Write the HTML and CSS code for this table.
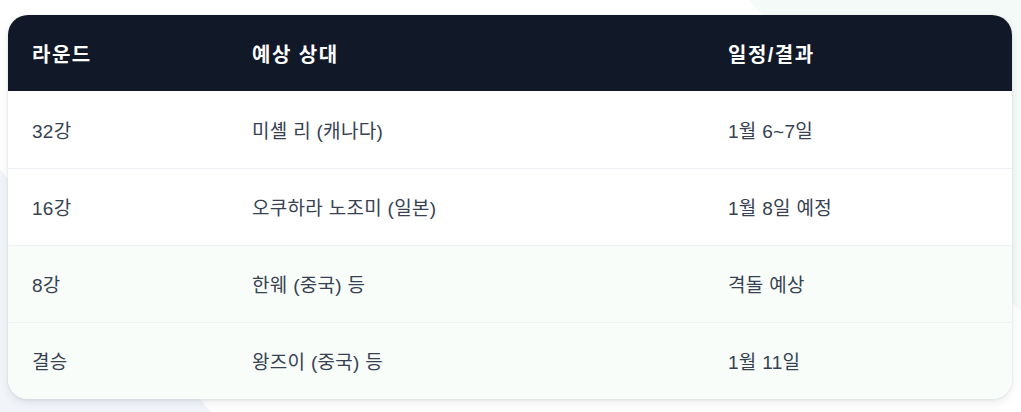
FILE: index.html
```html
<!DOCTYPE html>
<html lang="ko">
<head>
<meta charset="utf-8">
<link rel="stylesheet" href="styles.css">
<title>대진표</title>
</head>
<body>
<div class="page">
  <div class="card">
    <table class="bracket">
      <colgroup>
        <col class="c-round">
        <col class="c-opp">
        <col class="c-date">
      </colgroup>
      <thead>
        <tr><th>라운드</th><th>예상 상대</th><th>일정/결과</th></tr>
      </thead>
      <tbody>
        <tr><td>32강</td><td>미셸 리 (캐나다)</td><td>1월 6~7일</td></tr>
        <tr><td>16강</td><td>오쿠하라 노조미 (일본)</td><td>1월 8일 예정</td></tr>
        <tr class="future"><td>8강</td><td>한웨 (중국) 등</td><td>격돌 예상</td></tr>
        <tr class="future"><td>결승</td><td>왕즈이 (중국) 등</td><td>1월 11일</td></tr>
      </tbody>
    </table>
  </div>
</div>
</body>
</html>
```

FILE: styles.css
```css
html, body {
  margin: 0;
  padding: 0;
  height: 100%;
}
body {
  background: linear-gradient(49deg, #f1f4f9 0%, #f1f4f9 15.3%, #ffffff 15.3%, #ffffff 80.3%, #f4faf7 80.3%, #f4faf7 100%);
  font-family: "Liberation Sans", "Noto Sans CJK KR", sans-serif;
  color: #374151;
}
.page {
  padding: 15px 9px 0 8px;
}
.card {
  border-radius: 20px;
  overflow: hidden;
  background: #ffffff;
  box-shadow: 0 4px 10px rgba(15, 23, 42, 0.08), 0 1px 3px rgba(15, 23, 42, 0.08);
}
.bracket {
  width: 100%;
  border-collapse: collapse;
  table-layout: fixed;
}
.c-round { width: 220px; }
.c-opp { width: 476px; }
.c-date { width: 308px; }
.bracket th {
  background: #111827;
  color: #ffffff;
  font-weight: 700;
  font-size: 20px;
  letter-spacing: 1.5px;
  text-align: left;
  height: 76px;
  padding: 0 24px;
  box-sizing: border-box;
}
.bracket td {
  height: 77px;
  padding: 0 24px;
  font-size: 19px;
  letter-spacing: 0.3px;
  font-weight: 400;
  box-sizing: border-box;
  border-bottom: 1px solid #eef2f6;
}
.bracket tbody tr:last-child td {
  border-bottom: none;
}
.bracket tr.future td {
  background: #f8fdfa;
}
```
